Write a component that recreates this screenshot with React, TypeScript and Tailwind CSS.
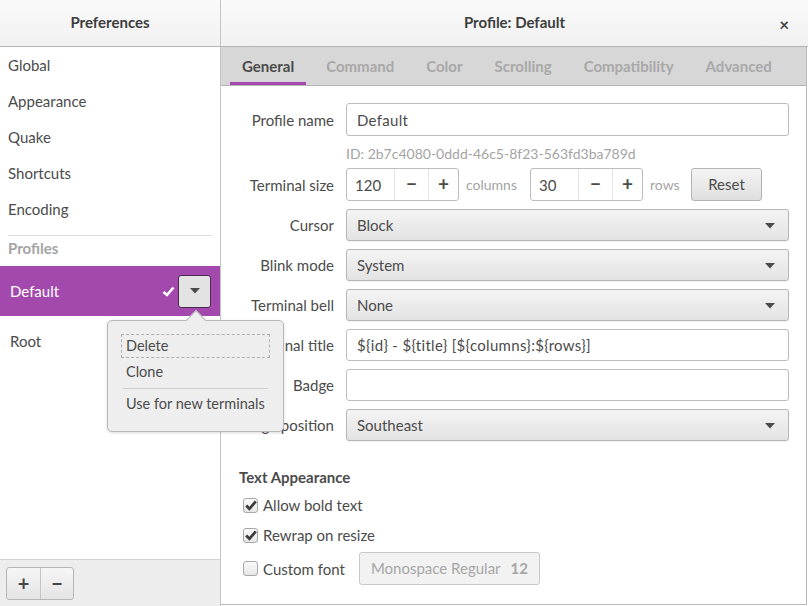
import { useState } from "react";

const font = { fontFamily: "Lato, 'Open Sans', sans-serif" };

function Caret() {
    return (
        <svg width="10" height="6" viewBox="0 0 10 6">
            <path d="M0 0 H10 L5 5.5 Z" fill="#4a4a4a" />
        </svg>
    )
}

function Combo({ value }: { value: string }) {
    return (
        <div className="flex-1 h-full flex items-center justify-between pl-[10px] pr-[13px] pt-[1px] rounded-[3px] border border-[#b6b6b6] bg-gradient-to-b from-[#f4f4f4] to-[#e3e3e3] shadow-[0_1px_0_rgba(0,0,0,0.05)]">
            <span>{value}</span>
            <Caret />
        </div>
    )
}

function Entry({ value }: { value: string }) {
    return (
        <div className="flex-1 h-full flex items-center px-[10px] pt-[1px] rounded-[3px] border border-[#bdbdbd] bg-white tracking-[0.3px]">
            {value}
        </div>
    )
}

function Row({ label, children }: { label: string, children: React.ReactNode }) {
    return (
        <div className="flex items-center h-[32px] mt-2">
            <div className="w-[113px] text-right pt-[1px]">{label}</div>
            <div className="flex-1 h-full flex ml-3">{children}</div>
        </div>
    )
}

function Spin({ value }: { value: string }) {
    return (
        <div className="flex h-full w-[113px] rounded-[3px] border border-[#bdbdbd] bg-white">
            <div className="w-[47px] flex items-center pl-[8px] pt-[1px]">{value}</div>
            <div className="w-[34px] flex items-center justify-center border-l border-[#e4e4e4] text-[19px] font-bold">−</div>
            <div className="flex-1 flex items-center justify-center border-l border-[#e4e4e4] text-[19px] font-bold">+</div>
        </div>
    )
}

function Check({ on }: { on: boolean }) {
    return (
        <div className="w-[15px] h-[15px] rounded-[3px] border border-[#a8a8a8] bg-gradient-to-b from-[#fbfbfb] to-[#e6e6e6] flex items-center justify-center">
            {on && (
                <svg width="12" height="11" viewBox="0 0 12 11">
                    <path d="M1.2 5.6 L4.4 8.8 L10.8 1.4" fill="none" stroke="#3c3c3c" strokeWidth="2.8" />
                </svg>
            )}
        </div>
    )
}

export default function App() {
    const [tab] = useState("General")
    const tabs = ["General", "Command", "Color", "Scrolling", "Compatibility", "Advanced"]
    const nav = ["Global", "Appearance", "Quake", "Shortcuts", "Encoding"]

    return (
        <div style={font} className="w-[808px] h-[606px] flex flex-col bg-white text-[15px] text-[#4b4b4b] relative overflow-hidden">
            {/* header bar */}
            <div className="h-[47px] flex border-b border-[#b3b3b3] bg-gradient-to-b from-[#fafafa] to-[#f1f1f1]">
                <div className="w-[221px] border-r border-[#c4c4c4] flex items-center justify-center font-bold text-[#3d3d3d] pb-[1px]">Preferences</div>
                <div className="flex-1 flex items-center justify-center font-bold text-[#3d3d3d] relative pb-[1px]">
                    Profile: Default
                    <span className="absolute right-[19px] top-[12px] text-[17px] font-bold text-[#444]">×</span>
                </div>
            </div>

            <div className="flex-1 flex min-h-0">
                {/* sidebar */}
                <div className="w-[221px] border-r border-[#c4c4c4] flex flex-col">
                    <div className="flex-1 flex flex-col">
                        {nav.map(n => (
                            <div key={n} className="h-[36px] flex items-center px-2">{n}</div>
                        ))}
                        <div className="mx-2 mt-2 border-t border-[#dedede]" />
                        <div className="h-[24px] flex items-center px-2 font-bold text-[#a4a4a4]">Profiles</div>
                        <div className="h-[50px] mt-[6px] bg-[#a349ae] flex items-center pl-[10px] pr-[9px] text-white">
                            <span className="flex-1">Default</span>
                            <svg width="13" height="11" viewBox="0 0 13 11" className="mr-[3px]">
                                <path d="M1.5 6 L5 9 L11.5 1.5" fill="none" stroke="#fff" strokeWidth="2.6" />
                            </svg>
                            <div className="w-[33px] h-[33px] rounded-[3px] border border-[#4a2a4e] bg-[#e3e3e3] flex items-center justify-center">
                                <Caret />
                            </div>
                        </div>
                        <div className="h-[50px] flex items-center pl-[10px]">Root</div>
                    </div>
                    <div className="h-[47px] border-t border-[#d2d2d2] bg-[#ededed] flex items-center px-[6px]">
                        <div className="flex h-[33px] rounded-[3px] border border-[#b6b6b6] bg-gradient-to-b from-[#f6f6f6] to-[#e4e4e4] text-[20px] font-bold text-[#444]">
                            <div className="w-[33px] flex items-center justify-center">+</div>
                            <div className="w-[33px] flex items-center justify-center border-l border-[#c4c4c4]">−</div>
                        </div>
                    </div>
                </div>

                {/* notebook */}
                <div className="flex-1 flex flex-col mr-[1px] mb-[1px] border-r border-b border-[#b8b8b8]">
                    <div className="h-[39px] flex bg-[#d7d7d7] border-b border-[#b3b3b3] pl-[9px] gap-2">
                        {tabs.map(t => (
                            <div key={t} className={"px-3 flex items-center font-bold border-b-[3px] " + (t === tab ? "border-[#a349ae] text-[#4b4b4b]" : "border-transparent text-[#a8a8a8]")}>
                                <span className="mt-[3px]">{t}</span>
                            </div>
                        ))}
                    </div>

                    <div className="flex-1 flex flex-col pt-[9px] pr-[17px]">
                        <div className="flex items-center h-[33px] mt-2">
                            <div className="w-[113px] text-right pt-[1px]">Profile name</div>
                            <div className="flex-1 h-full flex ml-3"><Entry value="Default" /></div>
                        </div>
                        <div className="h-[24px] mt-[5px] ml-[125px] flex items-center text-[14px] text-[#a4a4a4]">ID: 2b7c4080-0ddd-46c5-8f23-563fd3ba789d</div>
                        <div className="flex items-center h-[33px] mt-[3px]">
                            <div className="w-[113px] text-right pt-[1px]">Terminal size</div>
                            <div className="flex-1 h-full flex items-center ml-3">
                                <Spin value="120" />
                                <span className="ml-[7px] w-[64px] text-[14px] text-[#a4a4a4]">columns</span>
                                <Spin value="30" />
                                <span className="ml-[7px] w-[41px] text-[14px] text-[#a4a4a4]">rows</span>
                                <div className="h-full w-[71px] rounded-[3px] border border-[#b3b3b3] bg-gradient-to-b from-[#f4f4f4] to-[#dfdfdf] flex items-center justify-center">Reset</div>
                            </div>
                        </div>
                        <Row label="Cursor"><Combo value="Block" /></Row>
                        <Row label="Blink mode"><Combo value="System" /></Row>
                        <Row label="Terminal bell"><Combo value="None" /></Row>
                        <Row label="Terminal title"><Entry value="${id} - ${title} [${columns}:${rows}]" /></Row>
                        <Row label="Badge"><Entry value="" /></Row>
                        <Row label="Badge position"><Combo value="Southeast" /></Row>

                        <div className="mt-[26px] ml-[18px] h-[20px] flex items-center font-bold">Text Appearance</div>
                        <div className="mt-2 ml-[22px] h-[20px] flex items-center gap-[5px]"><Check on /> Allow bold text</div>
                        <div className="mt-[10px] ml-[22px] h-[20px] flex items-center gap-[5px]"><Check on /> Rewrap on resize</div>
                        <div className="mt-[7px] ml-[22px] h-[33px] flex items-center">
                            <Check on={false} />
                            <span className="ml-[5px] pt-[1px]">Custom font</span>
                            <div className="ml-[14px] h-full w-[181px] rounded-[3px] border border-[#c8c8c8] bg-[#f2f2f2] flex items-center justify-center gap-[10px] text-[#a6a6a6]">
                                <span>Monospace Regular</span>
                                <span className="font-bold">12</span>
                            </div>
                        </div>
                    </div>
                </div>
            </div>

            {/* profile popover */}
            <div className="absolute left-[107px] top-[320px] w-[177px] h-[112px] rounded-[5px] border border-[#b8b8b8] bg-[#eeeeee] shadow-[0_1px_3px_rgba(0,0,0,0.15)] px-[13px] pt-[13px] whitespace-nowrap text-[14.5px]">
                <div className="absolute left-[81px] top-[-8px] w-[14px] h-[14px] rotate-45 bg-[#eeeeee] border-l border-t border-[#b8b8b8]" />
                <div className="h-[24px] flex items-center px-[4px] border border-dashed border-[#b0b0b0]">Delete</div>
                <div className="h-[28px] flex items-center px-[5px]">Clone</div>
                <div className="mx-[2px] border-t border-[#d0d0d0] mt-[2px]" />
                <div className="h-[30px] flex items-center px-[5px]">Use for new terminals</div>
            </div>
        </div>
    )
}
